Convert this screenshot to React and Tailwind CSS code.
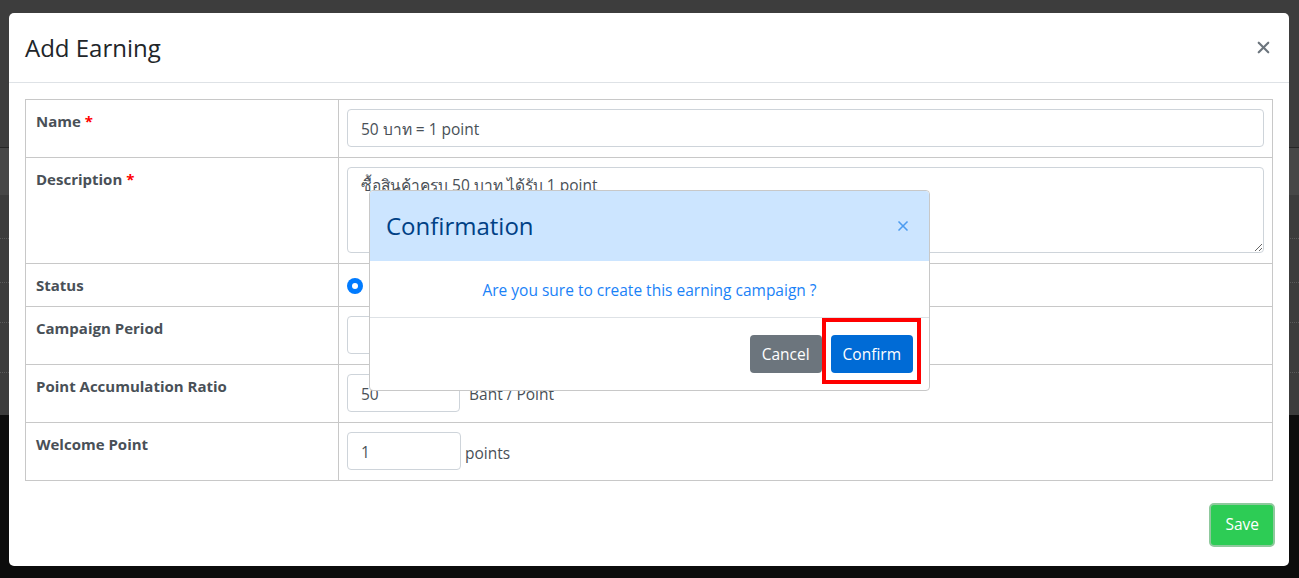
import { X } from 'lucide-react';

const font = { fontFamily: '"Open Sans", "Noto Sans", "DejaVu Sans", sans-serif' };

function Row({ label, required, children, cellPad = 'pt-[9px] pb-[10px]' }) {
	return (
		<tr>
			<td className="w-[313px] border border-[#c8c8c8] px-[10px] pt-[9px] align-top">
				<span className="text-[15px] font-bold text-[#495057]">
					{label}
					{required && <span className="text-[#ff0000]"> *</span>}
				</span>
			</td>
			<td className={`border border-[#c8c8c8] px-[8px] align-top ${cellPad}`}>{children}</td>
		</tr>
	);
}

function Input({ value, className = '' }) {
	return (
		<div
			className={`h-[38px] rounded-[4px] border border-[#ced4da] bg-white px-[13px] pt-[3px] flex items-center text-[15.5px] text-[#495057] ${className}`}
		>
			{value}
		</div>
	);
}

export default function App() {
	return (
		<div className="relative h-[578px] w-full overflow-hidden" style={font}>
			{/* dimmed page behind the modal */}
			<div className="flex h-full flex-col">
				<div className="h-[147px] bg-[#3d3d3d]" />
				<div className="h-px bg-[#262626]" />
				<div className="h-[47px] bg-[#474747]" />
				<div className="flex h-[220px] flex-col bg-[#3c3c3c]">
					<div className="h-[44px] border-b border-dotted border-[#5a5a5a]" />
					<div className="h-[44px] border-b border-dotted border-[#5a5a5a]" />
					<div className="h-[40px] border-b border-dotted border-[#5a5a5a]" />
					<div className="h-[50px] border-b border-dotted border-[#5a5a5a]" />
				</div>
				<div className="flex-1 bg-[#0c0c0c]" />
			</div>

			{/* Add Earning modal */}
			<div className="absolute left-[9px] top-[13px] flex h-[553px] w-[1280px] flex-col rounded-[5px] bg-white">
				<div className="flex h-[70px] items-center justify-between border-b border-[#dee2e6] pl-4 pr-4">
					<h5 className="text-[24px] font-medium text-[#212529]">Add Earning</h5>
					<X className="h-[19px] w-[19px] text-[#6c757d]" strokeWidth={2.75} />
				</div>
				<div className="px-4 pt-4">
					<table className="w-full border-collapse border border-[#c8c8c8]">
						<tbody>
							<Row label="Name" required>
								<Input value="50 บาท = 1 point" />
							</Row>
							<Row label="Description" required>
								<textarea
									readOnly
									defaultValue="ซื้อสินค้าครบ 50 บาท ได้รับ 1 point"
									className="block h-[86px] w-full rounded-[4px] border border-[#ced4da] px-[13px] py-[6px] text-[15.5px] text-[#495057] outline-none"
								/>
							</Row>
							<Row label="Status" cellPad="pt-[14px] pb-[12px]">
								<div className="flex h-4 w-4 items-center justify-center rounded-full bg-[#007bff]">
									<div className="h-[6px] w-[6px] rounded-full bg-white" />
								</div>
							</Row>
							<Row label="Campaign Period">
								<Input value="" className="w-[300px]" />
							</Row>
							<Row label="Point Accumulation Ratio">
								<div className="flex items-center gap-[9px]">
									<Input value="50" className="h-[37px] w-[113px]" />
									<span className="pt-[3px] text-[15.5px] text-[#495057]">Baht / Point</span>
								</div>
							</Row>
							<Row label="Welcome Point">
								<div className="flex items-center gap-[4px]">
									<Input value="1" className="h-[37px] w-[114px]" />
									<span className="pt-[5px] text-[15.5px] text-[#495057]">points</span>
								</div>
							</Row>
						</tbody>
					</table>
				</div>
				<div className="flex justify-end px-[14px] pt-[22px]">
					<button className="h-[44px] rounded-[5px] border-2 border-[#8fc99d] bg-[#2dcc55] px-[14px] text-[15.5px] text-white">
						Save
					</button>
				</div>
			</div>

			{/* Confirmation dialog */}
			<div className="absolute left-[369px] top-[190px] flex w-[561px] flex-col rounded-[4px] border border-[#c8c8c8] bg-white">
				<div className="flex h-[70px] items-center justify-between rounded-t-[4px] bg-[#cce5ff] pl-4 pr-[18px]">
					<h5 className="text-[24px] font-medium text-[#004085]">Confirmation</h5>
					<X className="h-4 w-4 text-[#4d9cf0]" strokeWidth={2.5} />
				</div>
				<div className="flex h-[57px] items-center justify-center border-b border-[#dee2e6] pt-[3px]">
					<p className="text-[15.5px] text-[#1a82f7]">Are you sure to create this earning campaign ?</p>
				</div>
				<div className="relative flex h-[72px] items-center justify-end gap-[9px] px-4">
					<button className="h-[38px] rounded-[4px] bg-[#6c757d] px-[12px] pt-[2px] text-[15.5px] text-white">Cancel</button>
					<button className="h-[38px] rounded-[4px] bg-[#006bd6] px-[12px] pt-[2px] text-[15.5px] text-white">Confirm</button>
					<div className="absolute right-[8px] top-[0px] h-[66px] w-[99px] border-[4px] border-[#ff0000]" />
				</div>
			</div>
		</div>
	);
}
